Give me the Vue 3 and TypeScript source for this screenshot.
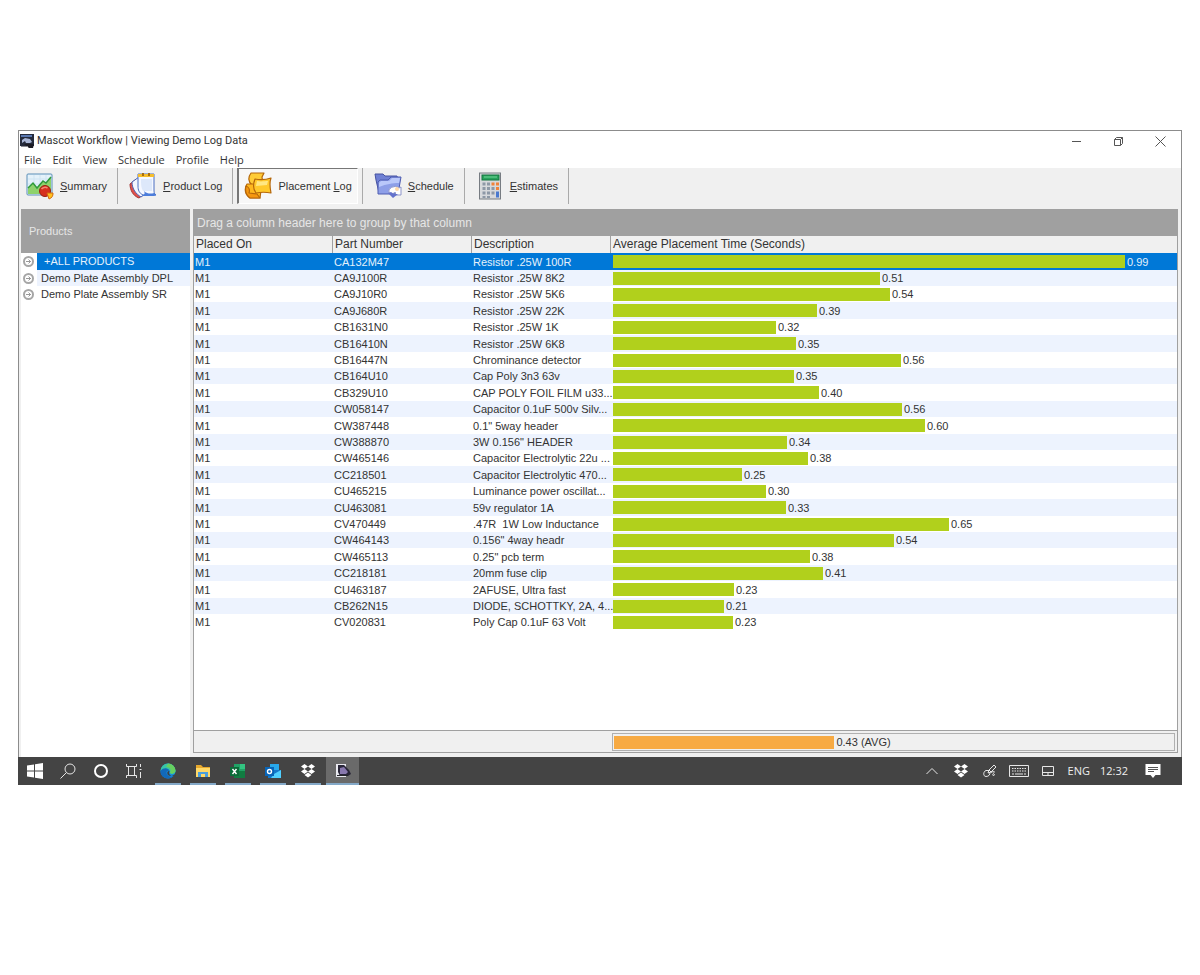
<script setup lang="ts">
import { ref } from 'vue'

interface Placement {
  machine: string
  part: string
  description: string
  seconds: string
  bar: number
}

const BAR_SCALE = 564

const row = (part: string, description: string, seconds: string, bar: number): Placement => ({
  machine: 'M1',
  part,
  description,
  seconds,
  bar,
})

const rows: Placement[] = [
  row('CA132M47', 'Resistor .25W 100R', '0.99', 512),
  row('CA9J100R', 'Resistor .25W 8K2', '0.51', 267),
  row('CA9J10R0', 'Resistor .25W 5K6', '0.54', 277),
  row('CA9J680R', 'Resistor .25W 22K', '0.39', 204),
  row('CB1631N0', 'Resistor .25W 1K', '0.32', 163),
  row('CB16410N', 'Resistor .25W 6K8', '0.35', 183),
  row('CB16447N', 'Chrominance detector', '0.56', 288),
  row('CB164U10', 'Cap Poly 3n3 63v', '0.35', 181),
  row('CB329U10', 'CAP POLY FOIL FILM u33...', '0.40', 206),
  row('CW058147', 'Capacitor 0.1uF 500v Silv...', '0.56', 289),
  row('CW387448', '0.1" 5way header', '0.60', 312),
  row('CW388870', '3W 0.156" HEADER', '0.34', 174),
  row('CW465146', 'Capacitor Electrolytic 22u ...', '0.38', 195),
  row('CC218501', 'Capacitor Electrolytic 470...', '0.25', 129),
  row('CU465215', 'Luminance power oscillat...', '0.30', 153),
  row('CU463081', '59v regulator 1A', '0.33', 173),
  row('CV470449', '.47R  1W Low Inductance', '0.65', 336),
  row('CW464143', '0.156" 4way headr', '0.54', 281),
  row('CW465113', '0.25" pcb term', '0.38', 197),
  row('CC218181', '20mm fuse clip', '0.41', 210),
  row('CU463187', '2AFUSE, Ultra fast', '0.23', 121),
  row('CB262N15', 'DIODE, SCHOTTKY, 2A, 4...', '0.21', 111),
  row('CV020831', 'Poly Cap 0.1uF 63 Volt', '0.23', 120),
]

const menus = ['File', 'Edit', 'View', 'Schedule', 'Profile', 'Help']
const products = ['+ALL PRODUCTS', 'Demo Plate Assembly DPL', 'Demo Plate Assembly SR']
const selectedRow = ref(0)
const selectedProduct = ref(0)

const barWidth = (bar: number) => ({ width: `${(bar / BAR_SCALE) * 100}%` })
</script>

<template>
  <div class="page">
    <div class="window">
      <header class="titlebar">
        <svg class="app-icon" viewBox="0 0 14 14" aria-hidden="true">
          <rect width="14" height="12" fill="#252b3c" />
          <path d="M1 1h11v2H1z" fill="#5a78b0" />
          <path d="M2 9V6l3-2 5 1 2 3-2 1H6l-1-2z" fill="#a9b6d6" />
          <path d="M4 10h10l-1 4H9z" fill="#1c1c24" />
          <path d="M1 12h7v1H1z" fill="#8a8a92" />
        </svg>
        <h1>Mascot Workflow | Viewing Demo Log Data</h1>
        <div class="window-controls">
          <button type="button" aria-label="Minimize">
            <svg viewBox="0 0 11 11"><path d="M1 5.5h9" /></svg>
          </button>
          <button type="button" aria-label="Restore">
            <svg viewBox="0 0 11 11"><path d="M1.5 3.5h6v6h-6zM1.5 3.5l2-2h6v6l-2 2M7.5 3.500l2-2" /></svg>
          </button>
          <button type="button" aria-label="Close">
            <svg viewBox="0 0 11 11"><path d="M.5.5l10 10M10.5.5l-10 10" /></svg>
          </button>
        </div>
      </header>

      <nav class="menubar">
        <button v-for="m in menus" :key="m" type="button">{{ m }}</button>
      </nav>

      <div class="toolbar" role="toolbar">
        <button type="button" class="tool">
          <svg viewBox="0 0 28 28" aria-hidden="true">
            <rect x="1" y="2" width="25" height="21" rx="1" fill="#e4f1fa" stroke="#5b8fb8" />
            <path d="M2 7h23M2 12h23M8 3v19M14 3v19M20 3v19" stroke="#cfe4f2" fill="none" />
            <path d="M2 16l5-5 4 5 6-7 3 2 5-6v17H2z" fill="#8ed26c" />
            <path d="M2 16l5-5 4 5 6-7 3 2 5-6" fill="none" stroke="#2f9a3c" stroke-width="1.5" />
            <circle cx="19" cy="19" r="5.5" fill="#d6301d" stroke="#98200f" />
            <path d="M15.500 17a4 3 0 0 1 6-1" stroke="#f58a74" stroke-width="1.500" fill="none" />
            <path d="M21 21h6a6 6 0 0 1-4 6z" fill="#ffc21f" stroke="#d46a10" />
          </svg>
          <span><u>S</u>ummary</span>
        </button>
        <button type="button" class="tool">
          <svg viewBox="0 0 28 28" aria-hidden="true">
            <path d="M1 12l5-4 9 14-5 4C4 24 1 18 1 12z" fill="#e2514b" stroke="#a33634" />
            <path d="M3 10l7-5 9 15-7 5C7 22 3 17 3 10z" fill="#f3f6ff" stroke="#4a62b4" />
            <path d="M9 2h16v15c0 3 0 5 2 6H14c-4-2-5-5-5-9z" fill="#f5f8ff" stroke="#4a6fc0" />
            <path d="M12 7h11v12H14c-2-3-2-7-2-12z" fill="#dde8fa" />
            <path d="M9 2h16v3H9z" fill="#f5bd2c" />
            <path d="M13 1h2v3h-2zM19 1h2v3h-2z" fill="#a66d10" />
            <path d="M13 23c3 0 3-2 2-4 3 3 7 3 10 2l2 2-2 1H14z" fill="#4c7ddb" />
          </svg>
          <span><u>P</u>roduct Log</span>
        </button>
        <button type="button" class="tool pressed" aria-pressed="true">
          <svg viewBox="0 0 28 28" aria-hidden="true">
            <g stroke="#b5670a" stroke-width="1.2" stroke-linejoin="round">
              <path d="M7 1h13l-2 4 1 8H8C4 10 4 5 7 1z" fill="#ffcb35" />
              <path d="M3 12h12l2 6-1 8H6c-5-3-6-9-3-14z" fill="#ffb81e" />
              <path d="M2 14c3 1 4 4 3 7l8 1 3 4H6c-4-3-5-8-4-12z" fill="#f6970f" />
              <path d="M11 7c5 1 10 1 16-1-2 5-1 10 0 15-5-1-10-1-15 0-3-4-3-9-1-14z" fill="#ffc92c" />
            </g>
            <path d="M13 9c4 1 8 0 11 0l-1 4c-4 0-7 1-11 1z" fill="#ffe784" />
          </svg>
          <span>Placement <u>L</u>og</span>
        </button>
        <button type="button" class="tool">
          <svg viewBox="0 0 28 28" aria-hidden="true">
            <path d="M1 2h8l2 2h12l1 3v14H5L2 8z" fill="#6f80d4" stroke="#4652a0" />
            <path d="M4 10l2-2h8l3-3h10l-3 17H4z" fill="#8e9fe8" stroke="#4e5cb0" />
            <path d="M5 11l2-2h8l3-3h8l-1 5c-7 0-12 1-20 4z" fill="#bac8fa" />
            <path d="M15 21a6 5 0 0 1 10-5l2-1v8h-7l2-2c-2-1-3 0-3 2z" fill="#fff" stroke="#8b93c9" />
            <path d="M14 21l5 5 5-4h-4l-3-2z" fill="#6472cc" />
            <circle cx="23" cy="17" r="2" fill="#ffd9aa" />
          </svg>
          <span><u>S</u>chedule</span>
        </button>
        <button type="button" class="tool">
          <svg viewBox="0 0 28 28" aria-hidden="true">
            <rect x="3.500" y="1" width="21" height="26" fill="#d7d9dc" stroke="#777c82" />
            <rect x="6" y="3" width="17" height="5" fill="#28a35c" stroke="#157440" />
            <path d="M8 5h13" stroke="#6fd597" />
            <path
              d="M6.500 10.500h3v3h-3zM11 10.500h3v3h-3zM6.500 15h3v3h-3zM11 15h3v3h-3zM15.500 15h3v3h-3zM6.500 19.500h3v3h-3zM11 19.500h3v3h-3zM15.500 19.500h3v3h-3zM6.500 24h3v2h-3zM11 24h3v2h-3z"
              fill="#8d98a6"
            />
            <path d="M15.500 10.500h3v3h-3zM20 10.500h3v3h-3zM20 15h3v3h-3z" fill="#f08239" />
            <path d="M20 19.500h3v6h-3z" fill="#4a79cf" />
          </svg>
          <span><u>E</u>stimates</span>
        </button>
      </div>

      <main class="content">
        <aside class="sidebar">
          <h2>Products</h2>
          <ul>
            <li v-for="(p, i) in products" :key="p">
              <button
                type="button"
                :class="{ selected: i === selectedProduct, striped: i % 2 === 1 }"
                @click="selectedProduct = i"
              >
                <svg viewBox="0 0 11 11" aria-hidden="true">
                  <circle cx="5.500" cy="5.500" r="4.500" fill="#fff" stroke="#a6a6a6" stroke-width="2" />
                  <path d="M3 5.500h5M5.500 3.500l2 2-2 2" stroke="#999" fill="none" />
                </svg>
                <span>{{ p }}</span>
              </button>
            </li>
          </ul>
        </aside>

        <section class="grid">
          <div class="group-hint">Drag a column header here to group by that column</div>
          <div class="rows">
            <table>
              <colgroup>
                <col class="c-placed" />
                <col class="c-part" />
                <col class="c-desc" />
                <col />
              </colgroup>
              <thead>
                <tr>
                  <th scope="col">Placed On</th>
                  <th scope="col">Part Number</th>
                  <th scope="col">Description</th>
                  <th scope="col">Average Placement Time (Seconds)</th>
                </tr>
              </thead>
              <tbody>
                <tr
                  v-for="(r, i) in rows"
                  :key="r.part"
                  :class="{ selected: i === selectedRow }"
                  @click="selectedRow = i"
                >
                  <td>{{ r.machine }}</td>
                  <td>{{ r.part }}</td>
                  <td>{{ r.description }}</td>
                  <td class="measure">
                    <div class="meter">
                      <span class="bar" :style="barWidth(r.bar)"></span>
                      <span>{{ r.seconds }}</span>
                    </div>
                  </td>
                </tr>
              </tbody>
            </table>
          </div>
          <footer class="summary">
            <div class="meter average">
              <span class="bar" :style="barWidth(222)"></span>
              <span>0.43 (AVG)</span>
            </div>
          </footer>
        </section>
      </main>

      <div class="taskbar">
        <div class="system">
          <button type="button" aria-label="Start">
            <svg viewBox="0 0 16 16"><path d="M0 2.500l7-1v6H0zM8 1.300L16 0v7.500H8zM0 8.500h7v6l-7-1zM8 8.500h8V16l-8-1.300z" fill="#fff" /></svg>
          </button>
          <button type="button" aria-label="Search">
            <svg viewBox="0 0 16 16" class="line"><circle cx="10" cy="6" r="5" /><path d="M6.500 9.500L.5 15.500" /></svg>
          </button>
          <button type="button" aria-label="Cortana">
            <svg viewBox="0 0 16 16"><circle cx="8" cy="8" r="6" fill="none" stroke="#fff" stroke-width="2" /></svg>
          </button>
          <button type="button" aria-label="Task view">
            <svg viewBox="0 0 16 16" class="line"><path d="M.5 1v2.500h10V1M.5 15v-2.500h10V15M2.500 3.500v9M8.500 3.500v9M14.500 1v3M14.500 9v6M13.500 6.500h2" /></svg>
          </button>
        </div>
        <div class="apps">
          <button type="button" aria-label="Edge">
            <svg viewBox="0 0 16 16">
              <circle cx="8" cy="8" r="7.500" fill="#168bd8" />
              <path d="M.5 8A7.500 7.500 0 0 1 15.500 8c0 3-4 4-5.500 2 1-4-5-6-9.500-2z" fill="#38c5a6" />
              <path d="M8 .5a7.500 7.500 0 0 1 7.500 7c0 3-4 4-5.500 2.500 2-4-1-6-4-6z" fill="#67d060" />
              <path d="M.5 8c3-4 8-3 9 0-3-1-4 2-2 4s4 2 6 1C9 18 0 15 .5 8z" fill="#1269ba" />
              <path d="M9.500 8c-2 0-3 2-1.500 4 2 2 5 1 7-1l-1 2c-3 1-6-2-4.500-5z" fill="#3c4146" />
            </svg>
          </button>
          <button type="button" aria-label="File Explorer">
            <svg viewBox="0 0 16 16">
              <path d="M1 2h5l2 2h7v10H1z" fill="#e6a82d" />
              <path d="M1 5h14v9H1z" fill="#ffd968" />
              <path d="M3 9h10v5h-3v-3H6v3H3z" fill="#4b9fdc" />
            </svg>
          </button>
          <button type="button" aria-label="Excel">
            <svg viewBox="0 0 16 16">
              <path d="M4 1h11v14H4z" fill="#21a366" />
              <path d="M4 8h11v7H4z" fill="#107c41" />
              <path d="M10 1h5v5h-5z" fill="#33c481" />
              <path d="M0 4h9v9H0z" fill="#0b6b38" />
              <path d="M2.500 6l4 5M6.500 6l-4 5" stroke="#fff" stroke-width="1.400" />
            </svg>
          </button>
          <button type="button" aria-label="Outlook">
            <svg viewBox="0 0 16 16">
              <path d="M5 1h9v8H5z" fill="#28a8ea" />
              <path d="M3 7h13v8H3z" fill="#1477c9" />
              <path d="M9 11l7-4v8H6z" fill="#50d0ff" />
              <path d="M0 4h9v9H0z" fill="#0865b8" />
              <circle cx="4.500" cy="8.500" r="2" fill="none" stroke="#fff" stroke-width="1.400" />
            </svg>
          </button>
          <button type="button" aria-label="Dropbox">
            <svg viewBox="0 0 16 16"><path d="M4.500 1L8 3.500 4.500 6 1 3.500zM11.500 1L15 3.500 11.500 6 8 3.500zM4.500 6L8 8.500 4.500 11 1 8.500zM11.500 6L15 8.500 11.500 11 8 8.500zM8 9.500l3.500 2.500L8 14.500 4.500 12z" fill="#fff" /></svg>
          </button>
          <button type="button" class="active" aria-label="Mascot Workflow">
            <svg viewBox="0 0 16 16">
              <path d="M1 1h10v13H1z" fill="#e9e9ef" />
              <path d="M3 2h6l5 5 2 4-3 2H5L3 9z" fill="#292638" />
              <path d="M5 5l4-1 4 5-2 2H5z" fill="#8878ae" />
              <path d="M2 12h11v1H2z" fill="#25252b" />
            </svg>
          </button>
        </div>
        <div class="tray">
          <button type="button" aria-label="Show hidden icons">
            <svg viewBox="0 0 16 16" class="line"><path d="M2.500 11L8 5.500 13.500 11" /></svg>
          </button>
          <button type="button" aria-label="Dropbox status">
            <svg viewBox="0 0 16 16"><path d="M4.500 1L8 3.500 4.500 6 1 3.500zM11.500 1L15 3.500 11.500 6 8 3.500zM4.500 6L8 8.500 4.500 11 1 8.500zM11.500 6L15 8.500 11.500 11 8 8.500zM8 9.500l3.500 2.500L8 14.500 4.500 12z" fill="#fff" /></svg>
          </button>
          <button type="button" aria-label="Pen workspace">
            <svg viewBox="0 0 16 16" class="line"><path d="M6 10l1-3 5-5 2 2-5 5zM7 7l2 2M7 7.500H4c-3 1-3 6 0 6s4-2 4-4M9 9.500c2-1 4-2 3 0s-2 2-1 3l2-1" /></svg>
          </button>
          <button type="button" aria-label="Touch keyboard">
            <svg viewBox="0 0 20 16" class="line wide"><path d="M.5 2.500h19v11H.5z" /><path d="M3 5.500h14M3 8h14" stroke-dasharray="1.500 1" /><path d="M3 11h2M6 11h8M15 11h2" /></svg>
          </button>
          <button type="button" aria-label="Touchpad">
            <svg viewBox="0 0 16 16" class="line"><path d="M2.500 3.500h11v9h-11zM2.500 9.500h11M8 9.500v3" /></svg>
          </button>
          <span class="lang">ENG</span>
          <time>12:32</time>
          <button type="button" aria-label="Notifications">
            <svg viewBox="0 0 16 16"><path d="M.5 1h15v11h-5L8 15l-2.500-3h-5z" fill="#fff" /><path d="M3 4.500h10M3 6.500h10M3 8.500h6" stroke="#555" /></svg>
          </button>
        </div>
      </div>
    </div>
  </div>
</template>

<style>
body {
  margin: 0;
  background: #fff;
}
</style>

<style scoped>
.page {
  box-sizing: border-box;
  min-height: 100vh;
  padding: 130px 18px 190px;
  display: flex;
  flex-direction: column;
  font: 11px/16px 'Liberation Sans', Arial, sans-serif;
  color: #333;
}
button {
  font: inherit;
  color: inherit;
  background: none;
  border: 0;
  padding: 0;
  margin: 0;
}
h1,
h2,
ul {
  margin: 0;
  padding: 0;
  font: inherit;
  list-style: none;
}
svg {
  display: block;
  flex: none;
}
.window {
  flex: 1;
  display: flex;
  flex-direction: column;
  box-sizing: border-box;
  border: 1px solid #8c8c8c;
  border-bottom: 0;
  background: #f0f0f0;
}
.titlebar {
  display: flex;
  align-items: center;
  gap: 3px;
  height: 20px;
  padding-left: 1px;
  background: #fff;
  font: 11px/20px Roboto, sans-serif;
}
.app-icon {
  width: 14px;
  height: 14px;
}
.window-controls {
  margin-left: auto;
  display: flex;
}
.window-controls button {
  width: 42px;
  height: 18px;
  display: flex;
  align-items: center;
  justify-content: center;
}
.window-controls svg {
  width: 11px;
  height: 11px;
  fill: none;
  stroke: #555;
}
.menubar {
  display: flex;
  gap: 11px;
  height: 17px;
  padding-left: 5px;
  background: #fff;
  font: 11px/17px 'Open Sans', sans-serif;
}
.toolbar {
  display: flex;
  height: 41px;
}
.tool {
  box-sizing: border-box;
  display: flex;
  align-items: center;
  gap: 6px;
  height: 36px;
  padding: 0 10px 0 7px;
  border-right: 1px solid #aaa;
}
.tool + .tool {
  padding-left: 11px;
}
.tool svg {
  width: 28px;
  height: 28px;
}
.toolbar .pressed {
  margin: 0 4px;
  padding: 0 5px;
  border: 1px solid #fff;
  border-top-color: #777;
  border-left: 2px solid #777;
  background: #f7f7f7;
}
.tool.pressed + .tool {
  border-left: 1px solid #aaa;
}
.content {
  flex: 1;
  display: flex;
  gap: 3px;
  padding: 0 3px 4px 2px;
}
.sidebar {
  width: 169px;
  flex: none;
  margin-bottom: -4px;
  background: #fff;
}
.sidebar h2 {
  height: 44px;
  padding-left: 8px;
  line-height: 44px;
  background: #a0a0a0;
  color: #e6e6e6;
}
.sidebar li button {
  display: flex;
  align-items: center;
  width: 100%;
  height: 17px;
  line-height: 17px;
  text-align: left;
  white-space: nowrap;
}
.sidebar li:nth-child(2) button {
  height: 16px;
  line-height: 16px;
}
.sidebar li svg {
  width: 11px;
  height: 11px;
  margin: 0 3px 0 2px;
}
.sidebar li span {
  flex: 1;
  padding-left: 4px;
}
.sidebar .striped span {
  background: #edf3fe;
}
.sidebar .selected span {
  padding-left: 7px;
  background: #0078d7;
  color: #e5f1fb;
}
.grid {
  flex: 1;
  min-width: 0;
  display: flex;
  flex-direction: column;
  box-sizing: border-box;
  border: 1px solid #a0a0a0;
  border-top: 0;
  background: #fff;
}
.group-hint {
  height: 27px;
  padding-left: 3px;
  font-size: 12px;
  line-height: 28px;
  background: #a0a0a0;
  color: #e6e6e6;
}
.rows {
  flex: 1;
}
table {
  width: 100%;
  table-layout: fixed;
  border-collapse: separate;
  border-spacing: 0;
}
.c-placed,
.c-part,
.c-desc {
  width: 139px;
}
th {
  padding: 0 0 1px 2px;
  border-right: 1px solid #a0a0a0;
  background: #f0f0f0;
  font-size: 12px;
  font-weight: normal;
  line-height: 16px;
  text-align: left;
}
th:last-child {
  border-right: 0;
}
td {
  height: 16px;
  padding: 0 0 0 1px;
  line-height: 16px;
  white-space: pre;
}
.measure {
  padding-left: 2px;
}
tbody tr:nth-child(5n + 1) td,
tbody tr:nth-child(5n + 4) td {
  height: 17px;
}
tbody tr:nth-child(even) {
  background: #edf3fe;
}
tbody tr.selected {
  background: #0078d7;
  color: #e5f1fb;
}
.meter {
  display: flex;
  align-items: center;
  gap: 2px;
  white-space: nowrap;
}
.bar {
  height: 13px;
  background: #b1d01c;
}
.summary {
  display: flex;
  padding: 2px 2px 1px 418px;
  border-top: 1px solid #a0a0a0;
  background: #f0f0f0;
}
.average {
  flex: 1;
  height: 16px;
  padding-left: 1px;
  border: 1px solid #b0b0b0;
}
.average .bar {
  background: #f7aa43;
}
.taskbar {
  display: flex;
  height: 28px;
  margin: 0 -1px;
  background: #444;
  color: #eee;
}
.taskbar button {
  display: flex;
  align-items: center;
  justify-content: center;
  box-sizing: border-box;
  width: 33px;
  height: 28px;
}
.taskbar svg {
  width: 16px;
  height: 16px;
}
.line {
  fill: none;
  stroke: #e6e6e6;
}
.system,
.apps,
.tray {
  display: flex;
}
.apps {
  gap: 2px;
  padding-left: 1px;
}
.apps button {
  background: linear-gradient(#84a9c8, #84a9c8) center bottom / 26px 2px no-repeat;
}
.apps .active {
  background: linear-gradient(#84a9c8, #84a9c8) center bottom / 33px 2px no-repeat #6a6a6a;
}
.tray {
  margin-left: auto;
  padding-right: 15px;
  align-items: center;
  font: 11px/28px 'Open Sans', sans-serif;
}
.tray .lang {
  margin: 0 10px 0 5px;
}
.tray button {
  width: 29px;
}
.taskbar .wide {
  width: 20px;
}
time {
  margin-right: 10px;
}
</style>
